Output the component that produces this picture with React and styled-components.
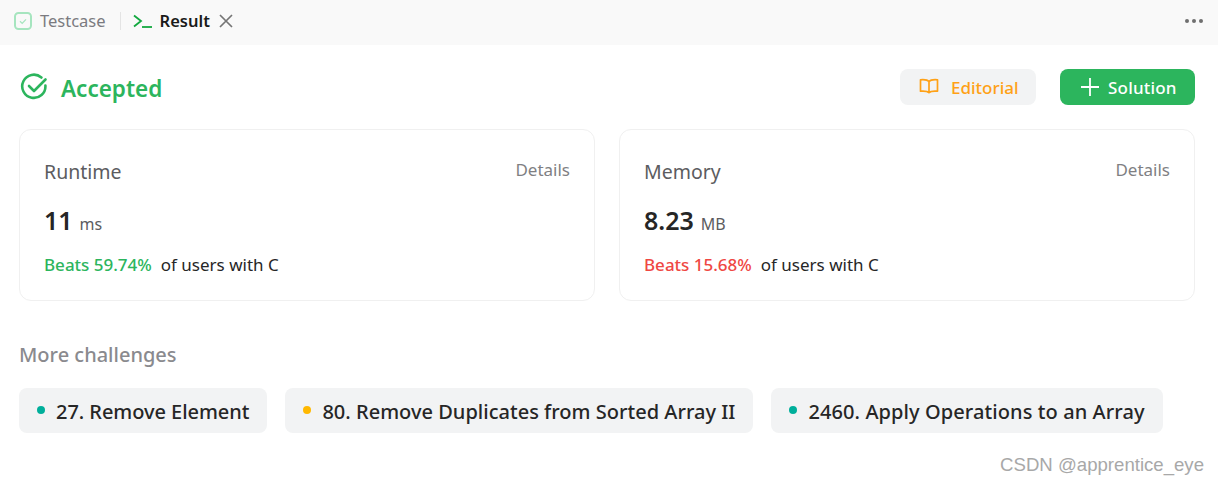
import React from "react";
import styled, { createGlobalStyle } from "styled-components";

const GlobalStyle = createGlobalStyle`
  html, body {
    margin: 0;
    padding: 0;
    background: #fff;
    font-family: "Noto Sans", "Open Sans", sans-serif;
  }
`;

const problems = [
  { title: "27. Remove Element", color: "#00af9b", tracking: "-0.05px" },
  { title: "80. Remove Duplicates from Sorted Array II", color: "#ffb800", tracking: "0.02px" },
  { title: "2460. Apply Operations to an Array", color: "#00af9b", tracking: "0.09px" },
];

const App = () => {
  return (
    <Page>
      <GlobalStyle />
      <TabBar>
        <CheckBoxIcon width="18" height="18" viewBox="0 0 18 18" fill="none">
          <rect x="1" y="1" width="16" height="16" rx="3.5" stroke="#a6e5bf" strokeWidth="2" />
          <path d="M6 9.2l2.2 2.2L12 7.4" stroke="#a6e5bf" strokeWidth="1.3" />
        </CheckBoxIcon>
        <TabLabel>Testcase</TabLabel>
        <TabDivider />
        <svg width="20" height="14" viewBox="0 0 20 14" fill="none">
          <path d="M1 1.5L8 7l-7 5.5" stroke="#12a83f" strokeWidth="1.8" />
          <path d="M9 13h10" stroke="#12a83f" strokeWidth="1.8" />
        </svg>
        <TabLabel $active>Result</TabLabel>
        <svg width="14" height="14" viewBox="0 0 14 14" fill="none">
          <path d="M1 1l12 12M13 1L1 13" stroke="#757575" strokeWidth="1.7" />
        </svg>
        <MoreDots>
          <Dot />
          <Dot />
          <Dot />
        </MoreDots>
      </TabBar>
      <Content>
        <StatusRow>
          <svg width="28" height="28" viewBox="0 0 28 28" fill="none">
            <path d="M25.4 12.5a11.6 11.6 0 1 1-4-8" stroke="#2cb55d" strokeWidth="2.6" strokeLinecap="round" />
            <path d="M9 13l5 5 11.5-11.5" stroke="#2cb55d" strokeWidth="2.6" strokeLinecap="round" strokeLinejoin="round" />
          </svg>
          <Status>Accepted</Status>
          <Actions>
            <EditorialButton>
              <svg width="20" height="18" viewBox="0 0 20 18" fill="none">
                <path
                  d="M10 3.5C8.5 1.8 5 1.500 1.500 1.800v11.400c3.500-.3 7 0 8.500 1.500 1.500-1.500 5-1.800 8.500-1.500V1.800C15 1.500 11.500 1.800 10 3.500zM10 3.500v11.500"
                  stroke="#ffa116"
                  strokeWidth="1.7"
                  strokeLinejoin="round"
                />
              </svg>
              Editorial
            </EditorialButton>
            <SolutionButton>
              <svg width="18" height="18" viewBox="0 0 18 18" fill="none">
                <path d="M9 0v18M0 9h18" stroke="#fff" strokeWidth="1.8" />
              </svg>
              Solution
            </SolutionButton>
          </Actions>
        </StatusRow>
        <Cards>
          <StatCard name="Runtime" value="11" unit="ms" beats="Beats 59.74%" color="#2cb55d" />
          <StatCard name="Memory" value="8.23" unit="MB" beats="Beats 15.68%" color="#ef4743" />
        </Cards>
        <SectionTitle>More challenges</SectionTitle>
        <Chips>
          {problems.map((p) => (
            <Chip key={p.title} $tracking={p.tracking}>
              <ChipDot $color={p.color} />
              {p.title}
            </Chip>
          ))}
        </Chips>
      </Content>
      <Watermark>CSDN @apprentice_eye</Watermark>
    </Page>
  );
};

const StatCard = ({ name, value, unit, beats, color }) => (
  <Card>
    <CardHead>
      <CardName>{name}</CardName>
      <Details>Details</Details>
    </CardHead>
    <ValueRow>
      <Value>{value}</Value>
      <Unit>{unit}</Unit>
    </ValueRow>
    <BeatsRow>
      <Beats $color={color}>{beats}</Beats>
      of users with C
    </BeatsRow>
  </Card>
);

const Page = styled.div`
  position: relative;
  width: 1218px;
  height: 484px;
  overflow: hidden;
  background: #fff;
`;

const TabBar = styled.div`
  height: 45px;
  box-sizing: border-box;
  padding: 0 15px 4px 14px;
  display: flex;
  align-items: center;
  background: #f9f9f9;
`;

const CheckBoxIcon = styled.svg`
  margin-right: 8px;
`;

const TabLabel = styled.span`
  font-size: 16.5px;
  font-weight: ${(p) => (p.$active ? 600 : 400)};
  color: ${(p) => (p.$active ? "#1a1a1a" : "#7b7b80")};
  margin: ${(p) => (p.$active ? "0 9px 0 7px" : "0")};
`;

const TabDivider = styled.div`
  width: 1px;
  height: 18px;
  background: #e4e4e4;
  margin: 0 12px 0 14px;
`;

const MoreDots = styled.div`
  margin-left: auto;
  display: flex;
  gap: 3px;
`;

const Dot = styled.span`
  width: 4px;
  height: 4px;
  border-radius: 50%;
  background: #6f6f6f;
`;

const Content = styled.div`
  padding: 24px 23px 0 19px;
`;

const StatusRow = styled.div`
  height: 36px;
  display: flex;
  align-items: center;
  gap: 12px;
  padding-left: 1px;
`;

const Status = styled.span`
  font-size: 22.5px;
  line-height: 40px;
  height: 36px;
  margin-left: 1px;
  font-weight: 600;
  color: #2cb55d;
`;

const Actions = styled.div`
  margin-left: auto;
  display: flex;
  gap: 24px;
`;

const ActionButton = styled.button`
  height: 36px;
  box-sizing: border-box;
  border: none;
  border-radius: 8px;
  display: flex;
  align-items: center;
  font-family: inherit;
  font-size: 17px;
  font-weight: 500;
  padding: 0;
`;

const EditorialButton = styled(ActionButton)`
  width: 136px;
  padding-left: 19px;
  gap: 12px;
  background: #f2f3f4;
  color: #ffa116;
`;

const SolutionButton = styled(ActionButton)`
  width: 135px;
  padding-left: 21px;
  gap: 9px;
  background: #2cb55d;
  color: #fff;
  letter-spacing: 0.2px;
`;

const Cards = styled.div`
  margin-top: 24px;
  display: grid;
  grid-template-columns: 1fr 1fr;
  gap: 24px;
`;

const Card = styled.div`
  height: 172px;
  box-sizing: border-box;
  padding: 27px 24px 0 24px;
  border: 1px solid #f0f0f0;
  border-radius: 12px;
`;

const CardHead = styled.div`
  display: flex;
  justify-content: space-between;
  align-items: flex-start;
`;

const CardName = styled.span`
  font-size: 19.5px;
  line-height: 30px;
  color: #5c5c60;
`;

const Details = styled.span`
  font-size: 17px;
  line-height: 26px;
  color: #7f7f83;
`;

const ValueRow = styled.div`
  margin-top: 16px;
  display: flex;
  align-items: baseline;
  gap: 7px;
`;

const Value = styled.span`
  font-size: 25px;
  line-height: 34px;
  font-weight: 600;
  color: #262626;
`;

const Unit = styled.span`
  font-size: 16px;
  color: #5c5c60;
`;

const BeatsRow = styled.div`
  margin-top: 16px;
  display: flex;
  gap: 9px;
  font-size: 17px;
  line-height: 24px;
  color: #262626;
`;

const Beats = styled.span`
  font-weight: 500;
  color: ${(p) => p.$color};
`;

const SectionTitle = styled.div`
  margin-top: 39px;
  font-size: 20px;
  line-height: 30px;
  font-weight: 500;
  color: #8a8a8e;
`;

const Chips = styled.div`
  margin-top: 18px;
  display: flex;
  gap: 18px;
`;

const Chip = styled.div`
  height: 45px;
  box-sizing: border-box;
  padding: 2px 18px 0;
  border-radius: 8px;
  display: flex;
  align-items: center;
  gap: 11px;
  background: #f2f3f4;
  font-size: 20px;
  font-weight: 500;
  color: #262626;
  white-space: nowrap;
  letter-spacing: ${(p) => p.$tracking};
`;

const ChipDot = styled.span`
  width: 8px;
  height: 8px;
  border-radius: 50%;
  margin-top: -3px;
  background: ${(p) => p.$color};
`;

const Watermark = styled.div`
  position: absolute;
  right: 14px;
  top: 453px;
  font-family: "Liberation Sans", sans-serif;
  font-size: 18.6px;
  line-height: 24px;
  color: #a8a8a8;
`;

export default App;
